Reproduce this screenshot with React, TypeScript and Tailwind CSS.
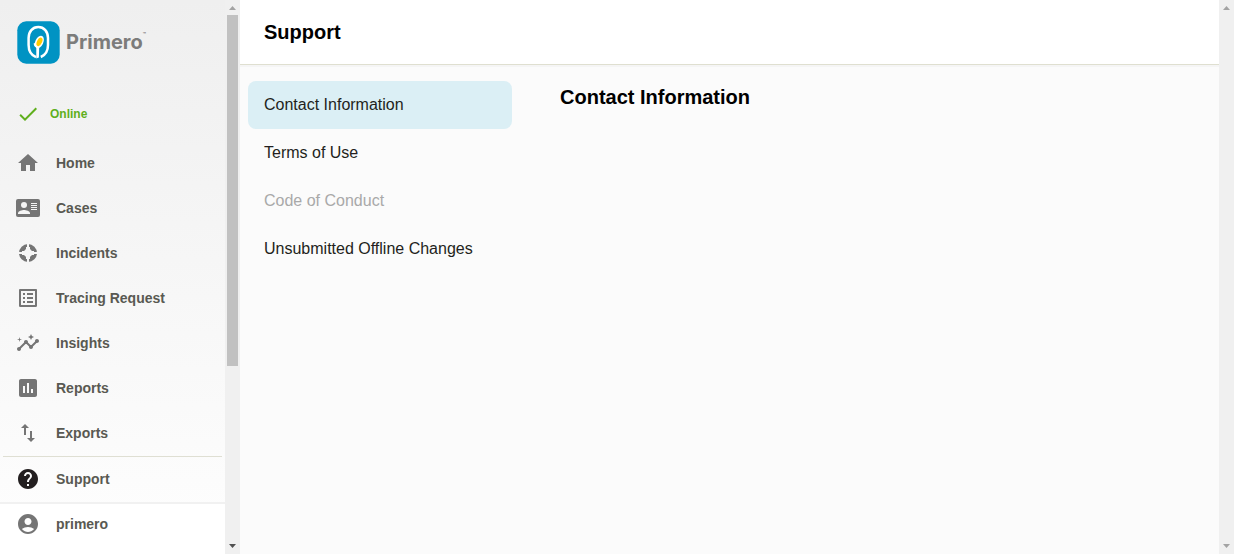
import type { ReactNode } from "react";
import { MdCheck, MdHelp, MdHome, MdImportExport, MdInsertChart, MdInsights, MdListAlt } from "react-icons/md";

function CasesIcon() {
  return (
    <svg viewBox="0 0 24 24" className="size-6" aria-hidden="true">
      <rect x="0" y="3" width="24" height="18" rx="2" fill="currentColor" />
      <g fill="#f5f5f5">
        <circle cx="8" cy="9" r="3" />
        <path d="M2 18v-1c0-2 4-3.1 6-3.1s6 1.1 6 3.1v1z" />
        <path d="M15 7h6v1h-6zM15 9h6v1h-6zM15 11h6v1h-6zM15 13h6v1h-6z" />
      </g>
    </svg>
  );
}

function IncidentsIcon() {
  return (
    <svg viewBox="0 0 24 24" className="size-6" aria-hidden="true">
      <circle cx="12" cy="12" r="6.7" fill="none" stroke="currentColor" strokeWidth="4.600" />
      <g stroke="#f6f6f6">
        <path d="M12 2v5M12 17v5M2 12h5M17 12h5" strokeWidth="2" />
        <path d="M12 6v4M12 14v4M6 12h4M14 12h4" strokeWidth="4" />
      </g>
    </svg>
  );
}

function AccountIcon() {
  return (
    <svg viewBox="0 0 24 24" className="size-6" fill="currentColor" aria-hidden="true">
      <path d="M12 2C6.48 2 2 6.48 2 12s4.48 10 10 10 10-4.48 10-10S17.52 2 12 2zm0 4c1.93 0 3.500 1.570 3.500 3.500S13.930 13 12 13s-3.500-1.570-3.500-3.500S10.070 6 12 6zm0 14c-2.030 0-4.430-.820-6.140-2.880C7.550 15.800 9.680 15 12 15s4.450.800 6.140 2.120C16.430 19.180 14.030 20 12 20z" />
    </svg>
  );
}

function Logo() {
  return (
    <a href="#home" className="flex shrink-0 items-center gap-1.5 px-4 pt-5">
      <svg viewBox="0 0 44 44" className="size-11" aria-hidden="true">
        <rect x="1.300" y="1.300" width="42.400" height="42.400" rx="9" fill="#0093c3" />
        <path
          d="M20 37.200c-4.600-2-7.400-6.200-7.400-12.200v-7c0-6.500 4-11 9.700-11s9.700 4.500 9.700 11v7c0 6-2.600 10-7.200 12"
          fill="none"
          stroke="#fff"
          strokeWidth="2.500"
        />
        <path d="M20.300 38.500V27.500c-2-1-2.700-2.300-2.500-4.500 1.600.2 2.300.8 3 2.200l2.400 1.300-.3 11z" fill="#fff" />
        <ellipse cx="23.300" cy="22" rx="4" ry="6.600" transform="rotate(25 23.300 22)" fill="#fff" />
        <ellipse cx="23.500" cy="21.800" rx="2.500" ry="4.600" transform="rotate(25 23.500 21.800)" fill="#fc0" />
      </svg>
      <span className="flex items-start font-[family-name:Inter,sans-serif] text-xl font-bold text-[#7c7c7b]">
        Primero
        <span className="pt-1 text-[5px] leading-none">™</span>
      </span>
    </a>
  );
}

function NavItem({ icon, label, className = "h-[45px]", active = false }: { icon: ReactNode; label: string; className?: string; active?: boolean }) {
  return (
    <a href={"#" + label.toLowerCase().replace(" ", "-")} className={"flex items-center gap-4 px-4 text-sm font-bold text-[#595952] " + className}>
      <span className={active ? "text-[#231f20]" : "text-[#757575]"}>{icon}</span>
      {label}
    </a>
  );
}

function Scrollbar({ arrow, downArrow, children }: { arrow: string; downArrow: string; children?: ReactNode }) {
  return (
    <div className="flex w-[15px] shrink-0 flex-col items-center bg-[#f0f0f0]" aria-hidden="true">
      <svg viewBox="0 0 15 15" className={"size-[15px] shrink-0 " + arrow} fill="currentColor">
        <path d="M4 10h7L7.500 6z" />
      </svg>
      <div className="flex w-full flex-1 flex-col px-0.5">{children}</div>
      <svg viewBox="0 0 15 15" className={"size-[15px] shrink-0 " + downArrow} fill="currentColor">
        <path d="M4 5h7L7.500 9z" />
      </svg>
    </div>
  );
}

export default function App() {
  return (
    <div className="flex h-screen overflow-hidden bg-[#fbfbfb] font-['Liberation_Sans',Arial,sans-serif] text-[#231f20]">
      <aside className="flex w-60 shrink-0">
        <div className="flex min-w-0 flex-1 flex-col overflow-hidden bg-linear-to-b from-[#efefef] to-[#fefefe]">
          <Logo />
          <div className="mt-6 flex h-[52px] shrink-0 items-center gap-2.5 px-4 text-xs font-bold text-[#5faf1c]">
            <MdCheck className="size-6" />
            Online
          </div>
          <nav className="shrink-0">
            <NavItem icon={<MdHome className="size-6" />} label="Home" />
            <NavItem icon={<CasesIcon />} label="Cases" />
            <NavItem icon={<IncidentsIcon />} label="Incidents" />
            <NavItem icon={<MdListAlt className="size-6" />} label="Tracing Request" />
            <NavItem icon={<MdInsights className="size-6" />} label="Insights" />
            <NavItem icon={<MdInsertChart className="size-6" />} label="Reports" />
            <NavItem icon={<MdImportExport className="size-6" />} label="Exports" />
            <hr className="mx-[3px] mt-px border-[#dfdfd3]" />
            <NavItem icon={<MdHelp className="size-6" />} label="Support" className="h-11" active />
            <div className="mt-px border-t-2 border-[#f1f1f1] bg-white pb-4">
              <NavItem icon={<AccountIcon />} label="primero" className="h-10" />
            </div>
          </nav>
        </div>
        <Scrollbar arrow="text-[#a3a3a3]" downArrow="text-[#505050]">
          <div className="h-[67%] bg-[#c1c1c1]" />
        </Scrollbar>
      </aside>
      <main className="min-w-0 flex-1">
        <header className="flex h-[65px] items-center border-b border-[#dfdfd0] bg-white px-6 shadow-[0_2px_0_#f5f5f5]">
          <h1 className="text-xl font-bold text-black">Support</h1>
        </header>
        <div className="flex gap-12 px-2 pt-4">
          <nav className="flex w-66 shrink-0 flex-col">
            <a href="#contact" aria-current="page" className="flex h-12 items-center rounded-lg bg-[#dbeff5] px-4">Contact Information</a>
            <a href="#terms" className="flex h-12 items-center px-4">Terms of Use</a>
            <a href="#conduct" aria-disabled="true" className="flex h-12 items-center px-4 text-[#a9a9a9]">Code of Conduct</a>
            <a href="#offline" className="flex h-12 items-center px-4">Unsubmitted Offline Changes</a>
          </nav>
          <section className="min-w-0 flex-1">
            <h2 className="text-xl leading-8 font-bold text-black">Contact Information</h2>
          </section>
        </div>
      </main>
      <Scrollbar arrow="text-[#a3a3a3]" downArrow="text-[#a3a3a3]" />
    </div>
  );
}
